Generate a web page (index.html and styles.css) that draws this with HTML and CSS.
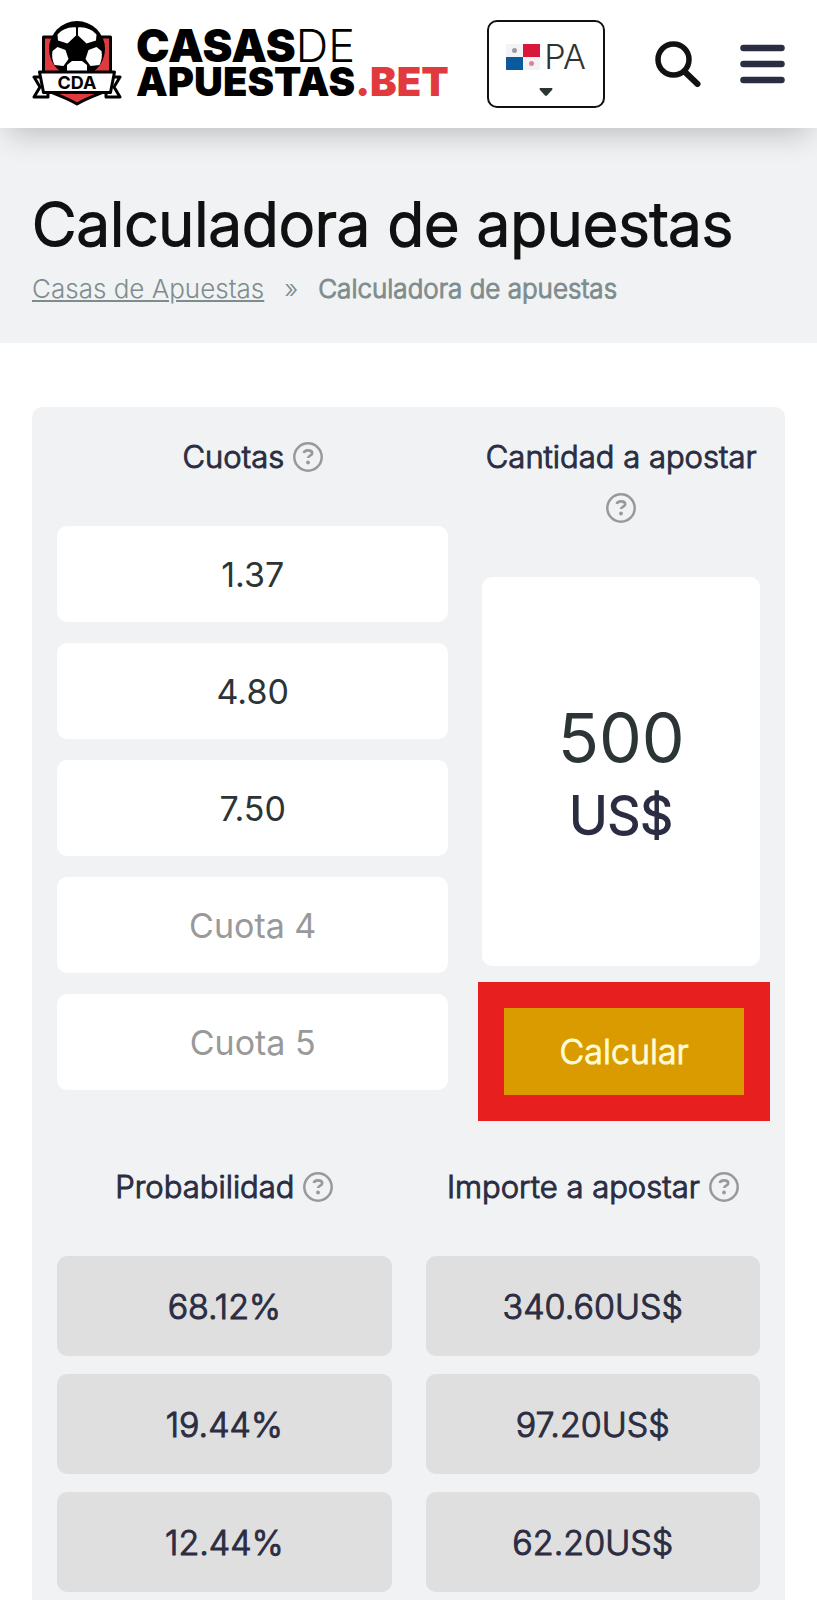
FILE: index.html
```html
<!DOCTYPE html>
<html lang="es">
<head>
  <meta charset="utf-8">
  <meta name="viewport" content="width=device-width, initial-scale=1">
  <title>Calculadora de apuestas</title>
  <link rel="stylesheet" href="styles.css">
</head>
<body>
  <svg class="sprite" aria-hidden="true">
    <symbol id="help" viewBox="0 0 30 30">
      <circle cx="15" cy="15" r="13.700" fill="none" stroke="#999" stroke-width="2.500"/>
      <path d="M10.800 11c.4-1.800 1.900-2.600 4.200-2.600 2.600 0 4.200 1 4.200 2.900 0 2.500-4.100 2.200-4.100 4.800" fill="none" stroke="#999" stroke-width="2.600"/>
      <circle cx="15" cy="20.500" r="1.900" fill="#999"/>
    </symbol>
  </svg>

  <header class="header">
    <a class="logo" href="#">
      <svg class="logo-badge" viewBox="0 0 90 86" aria-hidden="true">
        <path d="M11.500 16h67v52c-8 4-22 8-33.500 15C33.500 76 19.500 72 11.500 68z" fill="#e03a3e" stroke="#000" stroke-width="3" stroke-linejoin="round"/>
        <path d="M2 56h14v20H2l6-10z" fill="#fff" stroke="#000" stroke-width="3" stroke-linejoin="round"/>
        <path d="M88 56H74v20h14l-6-10z" fill="#fff" stroke="#000" stroke-width="3" stroke-linejoin="round"/>
        <circle cx="45" cy="28" r="28" fill="#000"/>
        <g fill="#fff">
          <path d="M44 6.500v8l-8.500 8-9.500-3-.5-6C30 8.500 37 5.500 44 6.500z"/>
          <path d="M46 6.500v8l8.500 8 9.500-3 .5-6C60 8.500 53 5.500 46 6.500z"/>
          <path d="M20.500 30l5-4 8 3 3 9-5 7-9-1c-2-4-3-9-2-14z"/>
          <path d="M69.500 30l-5-4-8 3-3 9 5 7 9-1c2-4 3-9 2-14z"/>
          <path d="M40 40h10l5 4v6H35v-6z"/>
        </g>
        <path d="M7.500 51h75l-4 20.500h-67z" fill="#fff" stroke="#000" stroke-width="3" stroke-linejoin="round"/>
        <text class="badge-text" x="45" y="67.500" text-anchor="middle">CDA</text>
      </svg>
      <span class="logo-text">
        <span class="logo-top">CASAS<span class="logo-thin">DE</span></span>
        <span class="logo-bottom">APUESTAS<span class="logo-red">.BET</span></span>
      </span>
    </a>
    <button class="country" type="button" aria-label="País: Panamá">
      <span class="country-name">
        <svg class="flag" viewBox="0 0 34 26" aria-hidden="true">
          <path d="M0 0h34v26H0z" fill="#f3f3f5"/>
          <path d="M17 0h17v13H17z" fill="#d8173b"/>
          <path d="M0 13h17v13H0z" fill="#0b5a9d"/>
          <circle cx="8.500" cy="6.500" r="2.500" fill="#9a9aa0"/>
          <circle cx="25.500" cy="19.500" r="2.500" fill="#e2809a"/>
        </svg>PA
      </span>
      <svg class="caret" viewBox="0 0 14 8" aria-hidden="true"><path d="M1 0h12q1 1 0 2L8 7.500q-1 .8-2 0L1 2q-1-1 0-2z" fill="#2d3436"/></svg>
    </button>
    <button class="icon-btn" type="button" aria-label="Buscar">
      <svg class="icon" viewBox="0 0 46 46" aria-hidden="true">
        <circle cx="18.500" cy="18.500" r="15.500" fill="none" stroke="#111" stroke-width="5.500"/>
        <path d="M30 31l12.500 12" stroke="#111" stroke-width="6" stroke-linecap="round"/>
      </svg>
    </button>
    <button class="icon-btn" type="button" aria-label="Menú">
      <svg class="icon" viewBox="0 0 46 46" aria-hidden="true">
        <path d="M4.500 7h38M4.500 23h38M4.500 39h38" stroke="#2b2d42" stroke-width="6.500" stroke-linecap="round"/>
      </svg>
    </button>
  </header>

  <section class="hero">
    <h1 class="title">Calculadora de apuestas</h1>
    <nav class="breadcrumb">
      <a href="#">Casas de Apuestas</a>
      <span class="sep">»</span>
      <strong>Calculadora de apuestas</strong>
    </nav>
  </section>

  <main class="calculator">
    <form class="form">
      <div class="odds">
        <h2 class="label">Cuotas <svg class="help"><use href="#help"/></svg></h2>
        <div class="odds-list">
          <input class="odd" type="text" aria-label="Cuota 1" placeholder="Cuota 1" value="1.37">
          <input class="odd" type="text" aria-label="Cuota 2" placeholder="Cuota 2" value="4.80">
          <input class="odd" type="text" aria-label="Cuota 3" placeholder="Cuota 3" value="7.50">
          <input class="odd" type="text" aria-label="Cuota 4" placeholder="Cuota 4">
          <input class="odd" type="text" aria-label="Cuota 5" placeholder="Cuota 5">
        </div>
      </div>
      <div class="stake">
        <label class="label" for="amount">Cantidad a apostar <svg class="help"><use href="#help"/></svg></label>
        <div class="amount-box">
          <input class="amount" id="amount" type="text" value="500">
          <span class="currency">US$</span>
        </div>
        <button class="calculate" type="button">Calcular</button>
      </div>
    </form>

    <table class="results">
      <thead>
        <tr>
          <th>Probabilidad <svg class="help"><use href="#help"/></svg></th>
          <th>Importe a apostar <svg class="help"><use href="#help"/></svg></th>
        </tr>
      </thead>
      <tbody>
        <tr><td>68.12%</td><td>340.60US$</td></tr>
        <tr><td>19.44%</td><td>97.20US$</td></tr>
        <tr><td>12.44%</td><td>62.20US$</td></tr>
      </tbody>
    </table>
  </main>
</body>
</html>
```
FILE: styles.css
```css
* {
  box-sizing: border-box;
}

body {
  margin: 0;
  background-color: #fff;
  font-family: Inter, "Liberation Sans", sans-serif;
  color: #2d3436;
}

button,
input {
  font-family: inherit;
  color: inherit;
}

.sprite {
  position: absolute;
  width: 0;
  height: 0;
}

/* header */
.header {
  position: relative;
  display: flex;
  align-items: center;
  height: 128px;
  padding: 0 32px;
  background-color: #fff;
  box-shadow: 0 14px 28px -8px rgba(0, 0, 0, 0.22);
}

.logo {
  display: flex;
  align-items: center;
  gap: 14px;
  margin-right: auto;
  color: #000;
  text-decoration: none;
}

.logo-badge {
  width: 90px;
  height: 86px;
}

.badge-text {
  font-size: 18px;
  font-weight: 700;
}

.logo-text {
  display: flex;
  flex-direction: column;
  font-weight: 900;
}

.logo-top {
  font-size: 45px;
  line-height: 36px;
}

.logo-bottom {
  font-size: 40px;
  line-height: 36px;
}

.logo-thin {
  font-weight: 300;
}

.logo-red {
  color: #e03a3e;
}

.country {
  display: flex;
  flex-direction: column;
  align-items: center;
  gap: 10px;
  width: 118px;
  height: 88px;
  margin-right: 50px;
  padding: 14px 0 0;
  background: none;
  border: 2px solid #111;
  border-radius: 10px;
}

.country-name {
  display: flex;
  align-items: center;
  gap: 4px;
  font-size: 34px;
  line-height: 42px;
  font-weight: 300;
}

.flag {
  width: 34px;
  height: 26px;
}

.caret {
  width: 14px;
  height: 8px;
}

.icon-btn {
  padding: 0;
  background: none;
  border: 0;
}

.icon-btn + .icon-btn {
  margin-left: 38px;
}

.icon {
  display: block;
  width: 46px;
  height: 46px;
}

/* title */
.hero {
  padding: 60px 32px 34px;
  background-color: #f0f2f4;
}

.title {
  margin: 0;
  font-size: 61px;
  line-height: 72px;
  font-weight: 350;
  -webkit-text-stroke: 2px #111;
  color: #111;
}

.breadcrumb {
  display: flex;
  gap: 20px;
  margin-top: 9px;
  font-size: 26px;
  line-height: 40px;
  font-weight: 300;
  color: #7f8c8d;
}

.breadcrumb a {
  color: inherit;
}

.breadcrumb strong {
  font-weight: 300;
  -webkit-text-stroke: 1px #7f8c8d;
}

/* calculator */
.calculator {
  margin: 64px 32px 0;
  padding: 24px 25px 8px;
  background-color: #f0f2f4;
  border-radius: 10px 10px 0 0;
}

.form {
  display: grid;
  grid-template-columns: 1.41fr 1fr;
  gap: 34px;
}

.label,
.results th {
  display: block;
  margin: 0 0 44px;
  font-size: 31px;
  line-height: 51px;
  font-weight: 350;
  -webkit-text-stroke: 1px #2b2d42;
  text-align: center;
  color: #2b2d42;
}

.help {
  width: 30px;
  height: 30px;
  vertical-align: -4px;
}

.odds-list {
  display: grid;
  gap: 21px;
}

.odd {
  width: 100%;
  height: 96px;
  padding: 0;
  background-color: #fff;
  border: 0;
  border-radius: 10px;
  font-size: 34px;
  text-align: center;
}

.odd::placeholder {
  color: #999;
  opacity: 1;
}

.amount-box {
  display: flex;
  flex-direction: column;
  justify-content: center;
  height: 389px;
  background-color: #fff;
  border-radius: 10px;
  text-align: center;
}

.amount {
  width: 100%;
  height: 88px;
  padding: 0;
  background: none;
  border: 0;
  font-size: 68px;
  font-weight: 400;
  text-align: center;
}

.currency {
  font-size: 52px;
  line-height: 70px;
  font-weight: 300;
  -webkit-text-stroke: 2px #2b2d42;
  color: #2b2d42;
}

.calculate {
  display: block;
  width: calc(100% + 14px);
  margin: 16px 0 0 -4px;
  padding: 0;
  background-color: #da9b00;
  border: 26px solid #e71f1f;
  font-size: 34px;
  line-height: 87px;
  font-weight: 350;
  -webkit-text-stroke: 1px #fffbd6;
  color: #fffbd6;
}

.results {
  width: calc(100% + 68px);
  margin: 22px -34px -18px;
  border-collapse: separate;
  border-spacing: 34px 18px;
  table-layout: fixed;
}

.results th {
  display: table-cell;
  padding: 0 0 26px;
}

.results td {
  height: 100px;
  padding: 0;
  background-color: #dfdfdf;
  border-radius: 10px;
  font-size: 34px;
  font-weight: 350;
  -webkit-text-stroke: 1px #2b2d42;
  text-align: center;
  color: #2b2d42;
}
```
